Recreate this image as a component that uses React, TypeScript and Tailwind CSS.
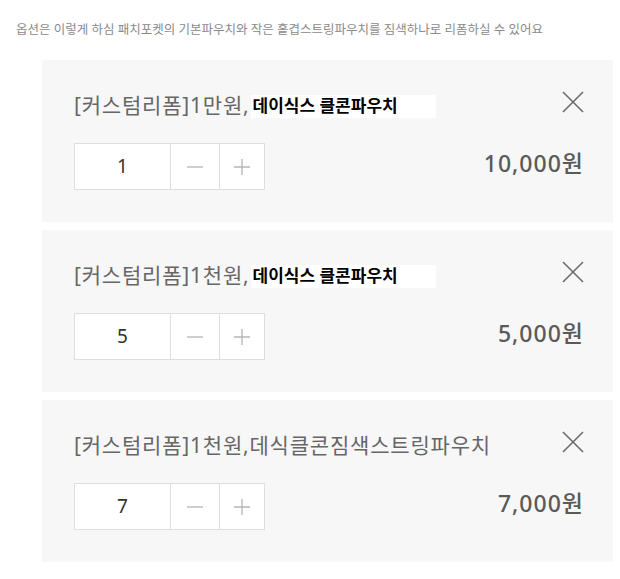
import React from "react";

type Item = {
  id: number;
  prefix: string;
  overlay?: string;
  qty: number;
  price: string;
};

const items: Item[] = [
  { id: 1, prefix: "[커스텀리폼]1만원,", overlay: "데이식스 클콘파우치", qty: 1, price: "10,000원" },
  { id: 2, prefix: "[커스텀리폼]1천원,", overlay: "데이식스 클콘파우치", qty: 5, price: "5,000원" },
  { id: 3, prefix: "[커스텀리폼]1천원,데식클콘짐색스트링파우치", qty: 7, price: "7,000원" },
];

function CloseIcon() {
  return (
    <svg width="22" height="22" viewBox="0 0 22 22" fill="none" stroke="#6b6b6b" strokeWidth="1.6">
      <path d="M1 1 L21 21 M21 1 L1 21" />
    </svg>
  );
}

function Stepper({ qty }: { qty: number }) {
  return (
    <div className="flex h-[47px] border border-[#dedede] bg-white">
      <div className="w-[95px] flex items-center justify-center text-[19px] text-[#333]">{qty}</div>
      <button className="w-[49px] border-l border-[#dedede] flex items-center justify-center">
        <svg width="16" height="16" viewBox="0 0 16 16" stroke="#b5b5b5" strokeWidth="1.3">
          <path d="M0 8 H16" />
        </svg>
      </button>
      <button className="w-[45px] border-l border-[#dedede] flex items-center justify-center">
        <svg width="16" height="16" viewBox="0 0 16 16" stroke="#b5b5b5" strokeWidth="1.3">
          <path d="M0 8 H16 M8 0 V16" />
        </svg>
      </button>
    </div>
  );
}

export default function App() {
  return (
    <div
      className="w-[620px] h-[579px] bg-white overflow-hidden"
      style={{ fontFamily: '"Noto Sans", "Noto Sans CJK KR", sans-serif' }}
    >
      <p className="pl-4 pt-[21px] h-[60px] text-[12.5px] leading-[18px] text-[#8a8a8a]">
        옵션은 이렇게 하심 패치포켓의 기본파우치와 작은 홑겹스트링파우치를 짐색하나로 리폼하실 수 있어요
      </p>
      <div className="ml-[42px] w-[571px] flex flex-col gap-2">
        {items.map((it) => (
          <div key={it.id} className="h-[162px] bg-[#f7f7f7] pl-8 pr-[29px] pt-[31px]">
            <div className="flex justify-between items-start">
              <div className="flex items-center h-[30px] text-[21px] text-[#666] tracking-[0.8px]">
                <span>{it.prefix}</span>
                {it.overlay && (
                  <span className="ml-[1px] w-[185px] h-[23px] bg-white flex items-center pl-[2px] text-[17px] font-bold text-black tracking-normal">
                    {it.overlay}
                  </span>
                )}
              </div>
              <CloseIcon />
            </div>
            <div className="mt-[22px] flex justify-between items-center">
              <Stepper qty={it.qty} />
              <span className="text-[23px] font-medium text-[#5a5a5a] -mt-[6px] tracking-[1px]">{it.price}</span>
            </div>
          </div>
        ))}
      </div>
    </div>
  );
}
